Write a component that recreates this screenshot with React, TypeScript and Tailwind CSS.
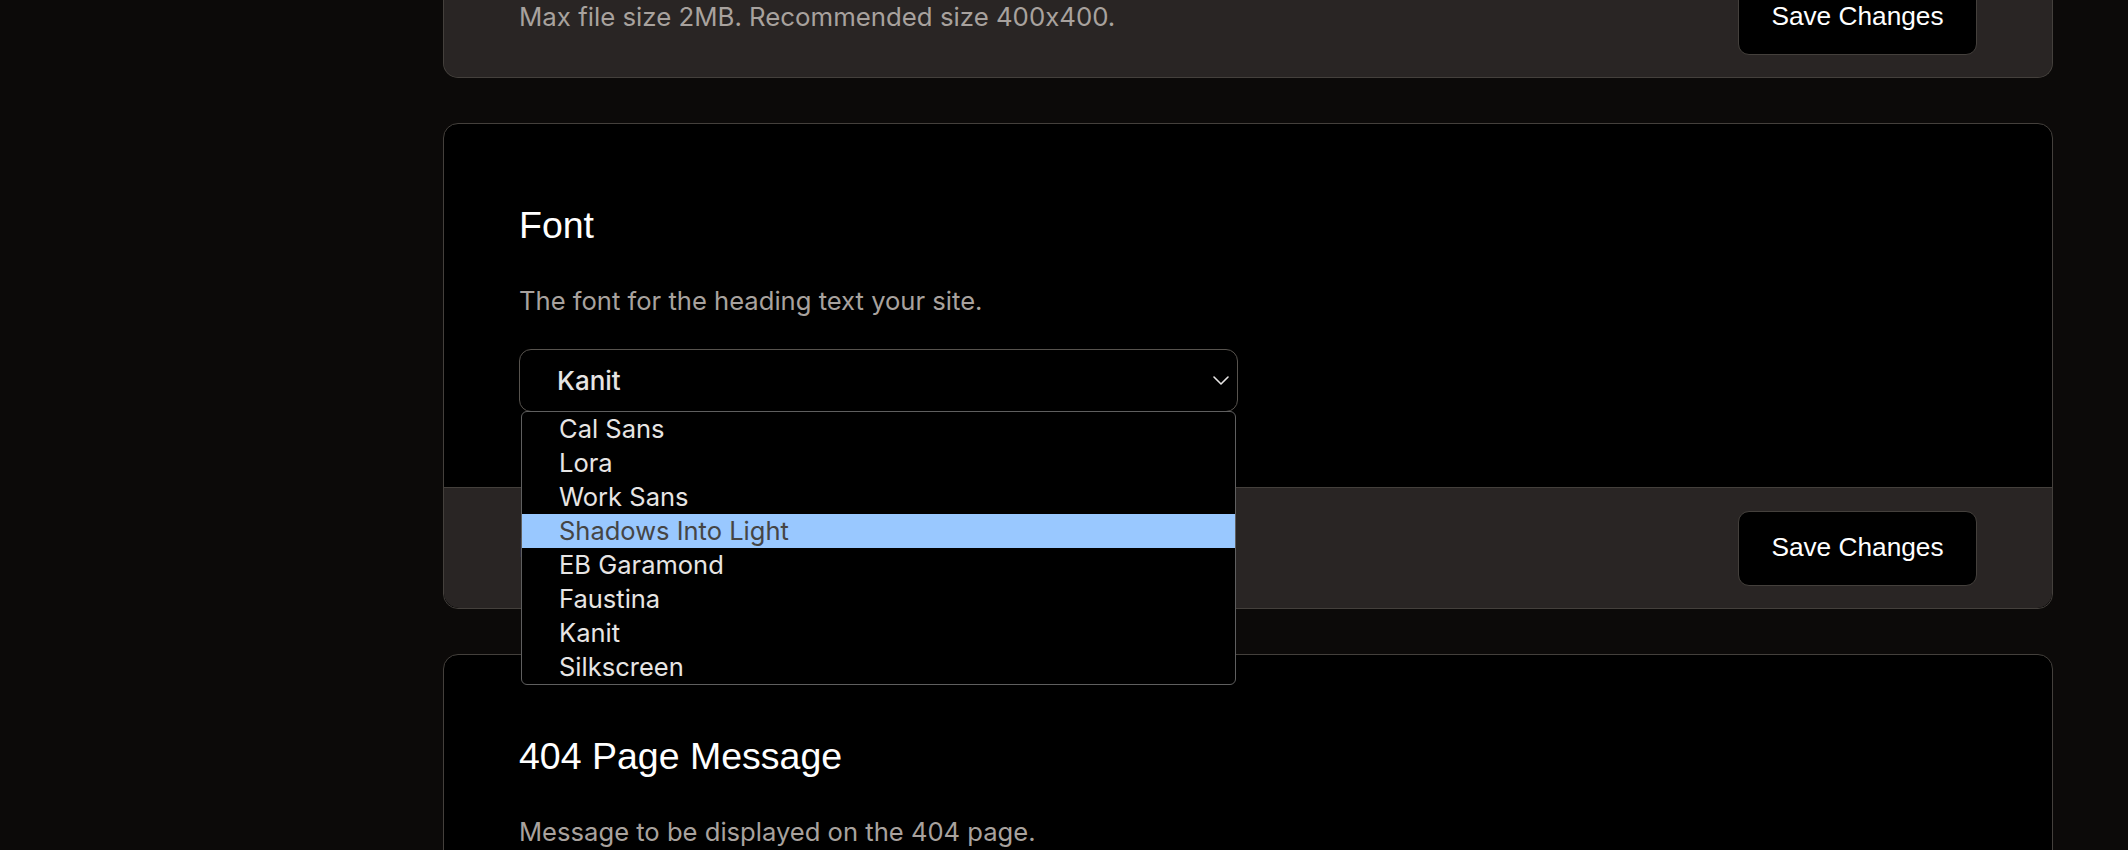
import type { ReactNode } from 'react';

// ---------------------------------------------------------------------------
// 공통 스타일 (page zoom ≈ 1.875 기준 픽셀 값)
// ---------------------------------------------------------------------------

const headingFont = { fontFamily: '"Liberation Sans", Arial, sans-serif' };
const bodyFont = { fontFamily: 'Inter, "Noto Sans", sans-serif', fontFeatureSettings: '"calt" 0' };

const FONT_OPTIONS = [
  'Cal Sans',
  'Lora',
  'Work Sans',
  'Shadows Into Light',
  'EB Garamond',
  'Faustina',
  'Kanit',
  'Silkscreen',
];

function ChevronDown(): JSX.Element {
  return (
    <svg width="16" height="9" viewBox="0 0 16 9" fill="none" aria-hidden="true">
      <path d="M1 1l7 7 7-7" stroke="#e7e5e4" strokeWidth="1.6" strokeLinecap="round" strokeLinejoin="round" />
    </svg>
  );
}

function SaveButton(): JSX.Element {
  return (
    <button
      type="button"
      className="flex h-[75px] w-[239px] items-center justify-center rounded-[11px] border border-[#44403c] bg-black text-[26.25px] text-white"
      style={headingFont}
    >
      Save Changes
    </button>
  );
}

function Footer({ helpText }: { helpText: string }): JSX.Element {
  return (
    <div className="flex h-[121px] items-center justify-between rounded-b-[15px] border-t border-[#44403c] bg-[#292524] px-[75px]">
      <p className="text-[25.8px] leading-[37.5px] text-[#a8a29e]" style={bodyFont}>
        {helpText}
      </p>
      <SaveButton />
    </div>
  );
}

function CardBody({ title, description, children }: { title: string; description: string; children?: ReactNode }): JSX.Element {
  return (
    <div className="flex flex-col gap-[30px] p-[75px]">
      <h2 className="text-[37.5px] leading-[52.5px] text-white" style={headingFont}>
        {title}
      </h2>
      <p className="text-[25.6px] leading-[37.5px] text-[#a8a29e]" style={bodyFont}>
        {description}
      </p>
      {children}
    </div>
  );
}

// 열린 상태의 폰트 select (네이티브 드롭다운 모양)
function FontSelect(): JSX.Element {
  return (
    <div className="relative w-[719px]" style={bodyFont}>
      <div className="flex h-[63px] items-center justify-between rounded-[12px] border border-[#57534e] bg-black pl-[37px] pr-[8px]">
        <span className="text-[26px] font-medium text-[#e7e5e4]">Kanit</span>
        <ChevronDown />
      </div>
      <ul className="absolute left-[2px] top-[62px] z-10 w-[715px] rounded-[6px] border border-[#5f5f5f] bg-black">
        {FONT_OPTIONS.map((name) => (
          <li
            key={name}
            className={
              name === 'Shadows Into Light'
                ? 'h-[34px] bg-[#99c8ff] pl-[37px] text-[25.5px] leading-[34px] text-[#454545]'
                : 'h-[34px] pl-[37px] text-[25.5px] leading-[34px] text-[#e7e5e4]'
            }
          >
            {name}
          </li>
        ))}
      </ul>
    </div>
  );
}

export default function App(): JSX.Element {
  return (
    <div className="h-[850px] overflow-hidden bg-[#0c0a09]">
      <div className="ml-[443px] flex w-[1610px] flex-col gap-[45px]">
        {/* 로고 카드 — 푸터만 보임 */}
        <div className="-mt-[44px] rounded-b-[15px] border-x border-b border-[#44403c] bg-[#292524]">
          <Footer helpText="Max file size 2MB. Recommended size 400x400." />
        </div>

        {/* Font 카드 */}
        <div className="relative z-10 rounded-[15px] border border-[#44403c] bg-black">
          <CardBody title="Font" description="The font for the heading text your site.">
            <FontSelect />
          </CardBody>
          <Footer helpText="Please select a font." />
        </div>

        {/* 404 메시지 카드 */}
        <div className="rounded-[15px] border border-[#44403c] bg-black">
          <CardBody title="404 Page Message" description="Message to be displayed on the 404 page.">
            <div className="h-[150px] w-[1460px] rounded-[12px] border border-[#57534e] bg-black" />
          </CardBody>
        </div>
      </div>
    </div>
  );
}
